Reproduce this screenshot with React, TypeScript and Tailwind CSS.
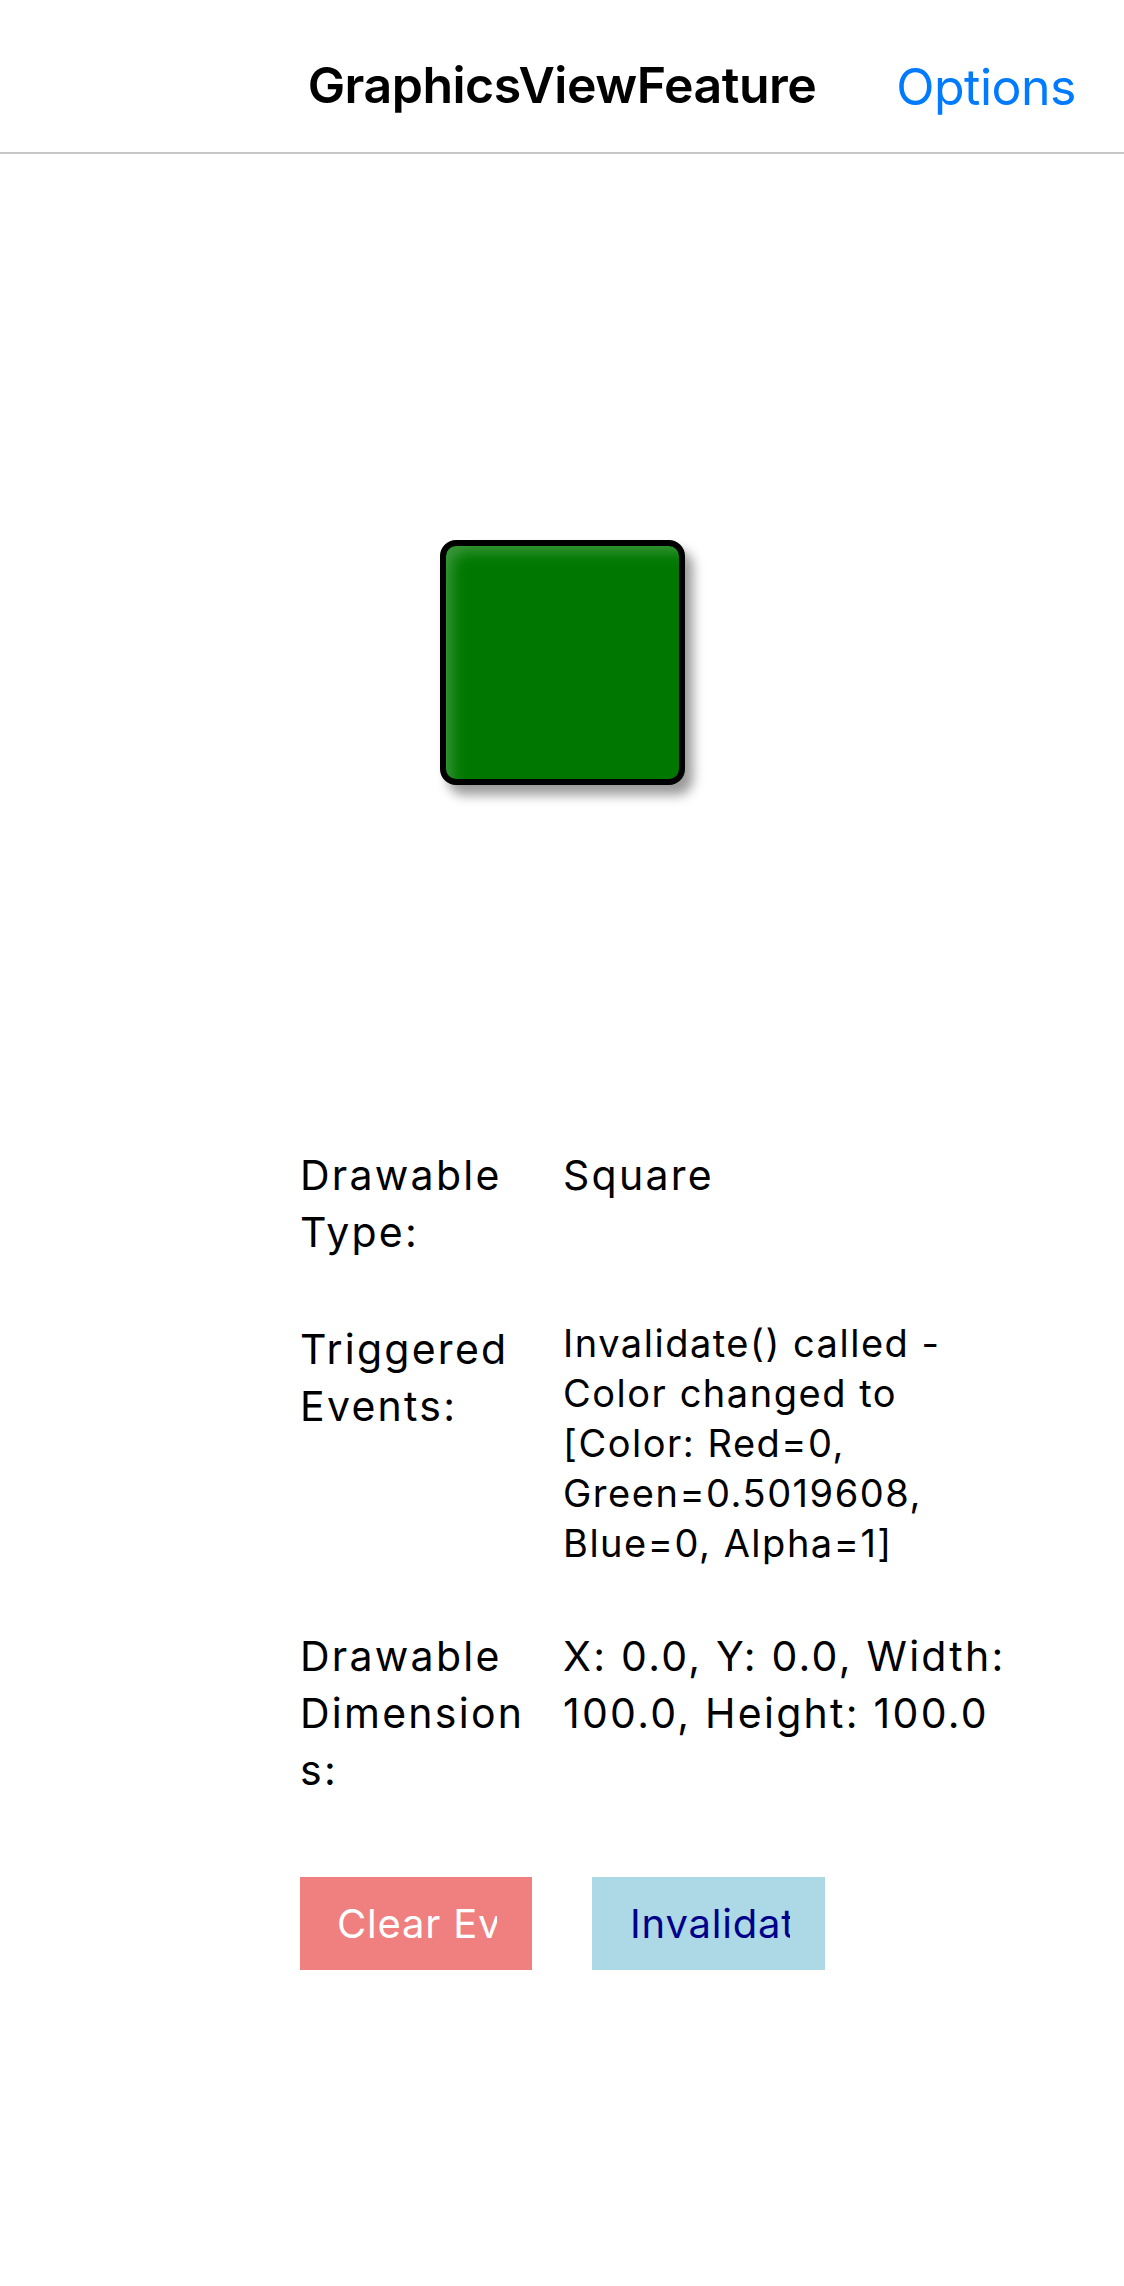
import React from "react";

const font = { fontFamily: "Inter, 'Noto Sans', sans-serif" };

function Label({ lines }: { lines: string[] }) {
  return (
    <div className="text-[41px] leading-[57px] text-black tracking-[0.055em]">
      {lines.map((l, i) => (
        <div key={i} className="whitespace-nowrap">{l}</div>
      ))}
    </div>
  );
}

export default function App() {
  return (
    <div className="min-h-[2286px] w-[1124px] bg-white" style={font}>
      <header className="relative h-[154px] border-b-2 border-[#c6c6c8] flex items-center justify-center">
        <div className="text-[50px] font-semibold text-black mt-[18px] tracking-[-0.01em]">GraphicsViewFeature</div>
        <div className="absolute right-[48px] top-[50px] text-[50px] text-[#007aff] tracking-[-0.01em]">Options</div>
      </header>

      <div className="flex justify-center pt-[386px]">
        <div className="w-[245px] h-[245px] rounded-[16px] border-[6px] border-black bg-[#007800] shadow-[inset_12px_12px_14px_-6px_rgba(255,255,255,0.22),8px_10px_12px_rgba(0,0,0,0.4)]" />
      </div>

      <div className="pl-[300px] pt-[362px]">
        <div className="grid grid-cols-[263px_1fr] gap-y-[60px]">
          <Label lines={["Drawable", "Type:"]} />
          <Label lines={["Square"]} />

          <Label lines={["Triggered", "Events:"]} />
          <div className="text-[38px] leading-[50px] text-black tracking-[0.04em] -mt-[3px]">
            <div className="whitespace-nowrap">Invalidate() called -</div>
            <div className="whitespace-nowrap">Color changed to</div>
            <div className="whitespace-nowrap">[Color: Red=0,</div>
            <div className="whitespace-nowrap">Green=0.5019608,</div>
            <div className="whitespace-nowrap">Blue=0, Alpha=1]</div>
          </div>

          <Label lines={["Drawable", "Dimension", "s:"]} />
          <Label lines={["X: 0.0, Y: 0.0, Width:", "100.0, Height: 100.0"]} />
        </div>

        <div className="flex gap-[60px] mt-[78px]">
          <div className="w-[232px] h-[93px] bg-[#f08080] flex items-center pl-[37px]">
            <div className="w-[160px] overflow-hidden whitespace-nowrap text-[40px] text-white tracking-[0.02em]">Clear Events</div>
          </div>
          <div className="w-[233px] h-[93px] bg-[#add8e6] flex items-center pl-[38px]">
            <div className="w-[160px] overflow-hidden whitespace-nowrap text-[40px] text-[#00008b] tracking-[0.02em]">Invalidate</div>
          </div>
        </div>
      </div>
    </div>
  );
}
